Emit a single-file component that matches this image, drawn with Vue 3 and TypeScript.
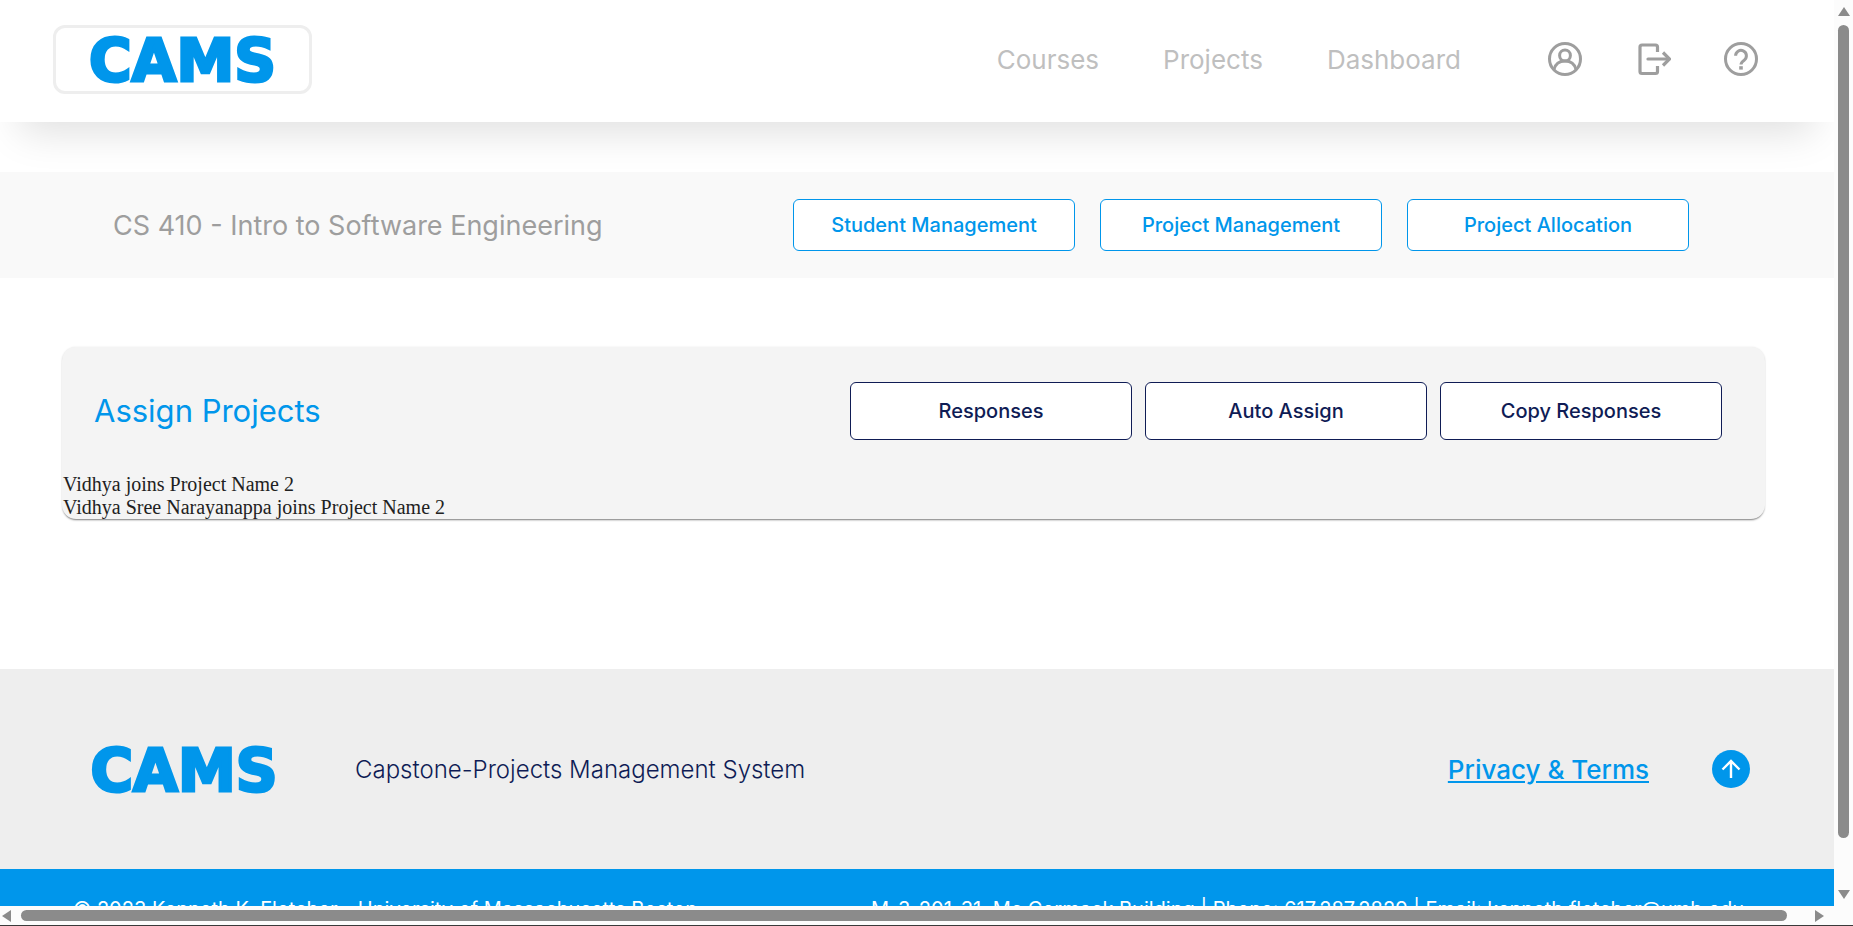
<script setup lang="ts">
interface Link { label: string; href: string }

const navLinks: Link[] = [
  { label: 'Courses', href: '#courses' },
  { label: 'Projects', href: '#projects' },
  { label: 'Dashboard', href: '#dashboard' },
]
const courseActions: string[] = ['Student Management', 'Project Management', 'Project Allocation']
const assignActions: string[] = ['Responses', 'Auto Assign', 'Copy Responses']
const assignments: string[] = [
  'Vidhya joins Project Name 2',
  'Vidhya Sree Narayanappa joins Project Name 2',
]
</script>

<template>
  <div class="shell">
    <div class="page">
      <header class="header">
        <a class="brand boxed" href="#home">CAMS</a>
        <div class="header-right">
          <nav class="nav">
            <a v-for="link in navLinks" :key="link.label" :href="link.href">{{ link.label }}</a>
          </nav>
          <div class="tools">
            <button type="button" class="icon" aria-label="Account">
              <svg viewBox="0 0 36 36" fill="none" stroke="currentColor" stroke-width="3">
                <circle cx="18" cy="18" r="15.5" />
                <circle cx="18" cy="14.5" r="5.4" />
                <path d="M7 28.5C8.5 22.5 12.5 20 18 20S27.5 22.5 29 28.5" />
              </svg>
            </button>
            <button type="button" class="icon" aria-label="Log out">
              <svg viewBox="-3 0 36 36" fill="none" stroke="currentColor" stroke-width="3.2">
                <path d="M19.5 11V6a2 2 0 0 0-2-2H4a2 2 0 0 0-2 2v24.5a2 2 0 0 0 2 2h13.5a2 2 0 0 0 2-2V25" />
                <path d="M10 18h21" stroke-linecap="round" />
                <path d="M25 11.5l6.500 6.500-6.500 6.500" />
              </svg>
            </button>
            <button type="button" class="icon" aria-label="Help">
              <svg viewBox="0 0 36 36" fill="none" stroke="currentColor" stroke-width="3">
                <circle cx="18" cy="18" r="15.5" />
                <path d="M12.6 14.8a5.400 5.400 0 1 1 8.900 4.100C19.5 20.3 18 21.400 18 23.600" />
                <path d="M18 25.2v3.400" stroke-width="3.6" />
              </svg>
            </button>
          </div>
        </div>
      </header>

      <section class="course">
        <h1>CS 410 - Intro to Software Engineering</h1>
        <div class="course-actions">
          <button v-for="label in courseActions" :key="label" type="button" class="btn blue">{{ label }}</button>
        </div>
      </section>

      <main class="main">
        <section class="card">
          <div class="card-head">
            <h2>Assign Projects</h2>
            <div class="card-actions">
              <button v-for="label in assignActions" :key="label" type="button" class="btn navy">{{ label }}</button>
            </div>
          </div>
          <div v-for="line in assignments" :key="line" class="line">{{ line }}</div>
        </section>
      </main>

      <footer>
        <div class="footer-top">
          <div class="footer-left">
            <a class="brand" href="#home">CAMS</a>
            <span class="tagline">Capstone-Projects Management System</span>
          </div>
          <div class="footer-right">
            <a class="terms" href="#terms">Privacy &amp; Terms</a>
            <button type="button" class="to-top" aria-label="Back to top">
              <svg viewBox="0 0 38 38" fill="none" stroke="#fff" stroke-width="2.4">
                <path d="M19 28V11.5M10.5 19.5L19 11l8.5 8.500" />
              </svg>
            </button>
          </div>
        </div>
        <div class="legal">
          <span>© 2023 Kenneth K. Fletcher - University of Massachusetts Boston</span>
          <span>M-3-201-31, Mc Cormack Building | Phone: 617.287.2829 | Email: kenneth.fletcher@umb.edu</span>
        </div>
      </footer>
    </div>

    <div class="bar vertical" aria-hidden="true">
      <svg class="arrow" viewBox="0 0 12 10"><path d="M6 0l6 9H0z" /></svg>
      <div class="track"><div class="thumb"></div></div>
      <svg class="arrow" viewBox="0 0 12 10"><path d="M0 1h12L6 10z" /></svg>
    </div>
    <div class="bar horizontal" aria-hidden="true">
      <svg class="arrow" viewBox="0 0 10 12"><path d="M9 0v12L0 6z" /></svg>
      <div class="track"><div class="thumb"></div></div>
      <svg class="arrow" viewBox="0 0 10 12"><path d="M1 0l9 6-9 6z" /></svg>
    </div>
  </div>
</template>

<style>
body { margin: 0; background: #fff; }
</style>

<style scoped>
* { box-sizing: border-box; }
.shell {
  display: grid;
  grid-template-columns: minmax(0, 1fr) 19px;
  grid-template-rows: minmax(0, 1fr) 19px;
  height: 100vh;
  background: #fcfcfc;
  border-bottom: 1px solid #3a3a3a;
  font-family: Inter, "Open Sans", sans-serif;
}
.page { overflow: hidden; background: #fff; }
a { text-decoration: none; }
button { font-family: inherit; cursor: pointer; }
h1, h2 { margin: 0; font-weight: 400; }

.header {
  position: relative;
  z-index: 1;
  display: flex;
  align-items: center;
  justify-content: space-between;
  height: 122px;
  padding: 0 75px 4px 53px;
  background: #fff;
  box-shadow: 0 30px 40px -20px rgba(0, 0, 0, 0.13);
}
.brand {
  display: flex;
  align-items: center;
  justify-content: center;
  width: 222px;
  height: 64px;
  padding-top: 4px;
  color: #0096eb;
  font-family: "DejaVu Sans", sans-serif;
  font-size: 58px;
  font-weight: 700;
  line-height: 60px;
  -webkit-text-stroke: 3px #0096eb;
}
.boxed { width: 259px; height: 69px; border: 3px solid #eee; border-radius: 12px; }
.header-right { display: flex; align-items: center; gap: 86px; }
.nav { display: flex; gap: 64px; font-size: 26px; }
.nav a { color: #bfbfbf; }
.tools { display: flex; gap: 52px; }
.icon { display: block; width: 36px; height: 36px; padding: 0; border: 0; background: none; color: #9e9e9e; }
.icon svg, .to-top svg { display: block; width: 100%; height: 100%; }

.course {
  display: flex;
  align-items: center;
  justify-content: space-between;
  height: 106px;
  margin-top: 50px;
  padding: 0 145px 0 113px;
  background: #f9f9f9;
}
.course h1 { color: #9e9e9e; font-size: 27px; }
.course-actions { display: flex; gap: 25px; }
.btn {
  width: 282px;
  height: 52px;
  padding: 0;
  border: 1px solid;
  border-radius: 6px;
  background: #fff;
  font-size: 20px;
  font-weight: 500;
}
.blue { color: #0096eb; border-color: #0096eb; }
.navy { height: 58px; color: #0f1c55; border-color: #0f1c55; }

.main { padding: 69px 69px 150px 62px; }
.card {
  border-radius: 14px;
  background: #f4f4f4;
  box-shadow: 0 2px 2px -1px rgba(0, 0, 0, 0.5), 0 0 2px rgba(0, 0, 0, 0.1);
  overflow: hidden;
}
.card-head {
  display: flex;
  align-items: center;
  justify-content: space-between;
  padding: 35px 43px 33px 32px;
}
.card h2 { color: #0096eb; font-size: 31px; line-height: 36px; }
.card-actions { display: flex; gap: 13px; }
.line {
  padding-left: 1px;
  color: #212121;
  font-family: "Liberation Serif", serif;
  font-size: 20px;
  line-height: 23px;
}

.footer-top {
  display: flex;
  align-items: center;
  justify-content: space-between;
  height: 200px;
  padding: 0 84px 0 73px;
  background: #eee;
}
.footer-left { display: flex; align-items: center; gap: 60px; }
.tagline { color: #0f1c55; font-size: 24px; font-weight: 300; }
.footer-right { display: flex; align-items: center; gap: 63px; }
.terms { color: #0096eb; font-size: 26px; font-weight: 500; text-decoration: underline; }
.to-top { width: 38px; height: 38px; padding: 0; border: 0; border-radius: 50%; background: #0096eb; }
.legal {
  display: flex;
  justify-content: space-between;
  padding: 28px 90px 28px 73px;
  background: #0096eb;
  color: #fff;
  font-size: 20px;
  line-height: 24px;
  white-space: nowrap;
}

.bar { display: flex; align-items: center; background: #fcfcfc; }
.vertical { flex-direction: column; padding: 7px 0; gap: 8px; }
.horizontal { padding: 0 10px 0 2px; gap: 9px; }
.arrow { flex: none; width: 12px; height: 10px; fill: #8b8b8b; }
.horizontal .arrow { width: 10px; height: 12px; }
.track { flex: 1; }
.thumb { background: #8b8b8b; border-radius: 6px; }
.vertical .thumb { width: 11px; height: 95%; }
.horizontal .thumb { width: 99%; height: 11px; }
</style>
